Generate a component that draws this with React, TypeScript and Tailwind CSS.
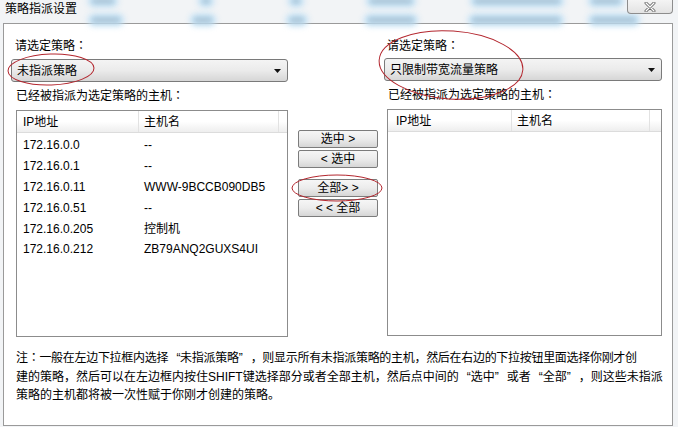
import React from "react";

const hosts: [string, string][] = [
  ["172.16.0.0", "--"],
  ["172.16.0.1", "--"],
  ["172.16.0.11", "WWW-9BCCB090DB5"],
  ["172.16.0.51", "--"],
  ["172.16.0.205", "控制机"],
  ["172.16.0.212", "ZB79ANQ2GUXS4UI"],
];

// blurred desktop showing through the glass frame
const blobs = [
  "left-[88px] top-[-5px] w-[30px]",
  "left-[198px] top-[-5px] w-[16px]",
  "left-[288px] top-[-5px] w-[16px]",
  "left-[366px] top-[-5px] w-[50px]",
  "left-[470px] top-[-5px] w-[94px]",
  "left-[588px] top-[-5px] w-[36px]",
  "left-[88px] top-[14px] w-[36px]",
  "left-[190px] top-[14px] w-[26px]",
  "left-[286px] top-[14px] w-[22px]",
  "left-[364px] top-[14px] w-[54px]",
  "left-[468px] top-[14px] w-[96px]",
  "left-[588px] top-[14px] w-[52px]",
];

// centred full-width punctuation, as the old bitmap font draws it
const Colon = () => <span className="font-['Noto_Sans_CJK_TC',sans-serif]">：</span>;
const Open = () => <span className="inline-block w-[12px] text-right">“</span>;
const Close = () => <span className="inline-block w-[12px] text-left">”</span>;

function Combo({ text }: { text: string }) {
  return (
    <div className="flex h-[23px] items-center justify-between rounded-[3px] border border-[#7a7a7a] bg-gradient-to-b from-[#f4f4f4] via-[#ebebeb] to-[#d6d6d6] pl-[5px] pr-[6px]">
      <span className="text-[12px] leading-none text-black">{text}</span>
      <svg width="7" height="4" viewBox="0 0 7 4">
        <path d="M0 0h7L3.5 4z" fill="#111" />
      </svg>
    </div>
  );
}

function HostList({
  rows,
  col1,
  col2,
}: {
  rows: [string, string][];
  col1: string;
  col2: string;
}) {
  return (
    <div className="flex h-full flex-col border border-[#8c8c8c] bg-white">
      <div className="flex h-[22px] items-center border-b border-[#dcdcdc] bg-gradient-to-b from-white via-white to-[#eeeeee] text-[12px]">
        <div className={`${col1} flex h-full items-center`}>IP地址</div>
        <div className={`${col2} flex h-full items-center border-l border-[#e2e2e2]`}>
          主机名
        </div>
        <div className="h-full flex-1 border-l border-[#e2e2e2]" />
      </div>
      <div className="mt-[2px]">
        {rows.map(([ip, name]) => (
          <div key={ip} className="flex h-[20.8px] items-center text-[12px]">
            <div className={col1}>{ip}</div>
            <div className={`${col2} border-l border-transparent`}>{name}</div>
          </div>
        ))}
      </div>
    </div>
  );
}

function MoveButton({ label, className = "" }: { label: string; className?: string }) {
  return (
    <button
      className={`flex h-[18px] w-full items-center justify-center rounded-[2px] border border-[#7c7c7c] bg-gradient-to-b from-[#f6f6f6] via-[#ececec] to-[#d6d6d6] text-[12px] leading-none text-black ${className}`}
    >
      {label}
    </button>
  );
}

export default function App() {
  return (
    <div className="relative h-[427px] w-[678px] overflow-hidden bg-[#f2f4f6] font-['Liberation_Sans','Noto_Sans_CJK_SC',sans-serif] text-black">
      {/* glass frame */}
      <div className="relative flex h-[23px] items-start">
        {blobs.map((b) => (
          <div key={b} className={`absolute ${b} h-[12px]`}>
            <div className="absolute inset-0 rounded-full bg-[#bfe1f6] blur-[3px]" />
            <div className="absolute inset-x-[4px] inset-y-[3px] rounded-full bg-[#a2b6c6] opacity-60 blur-[2.5px]" />
          </div>
        ))}
        <div className="relative ml-[5px] mt-[2px] text-[12px] leading-[14px]">策略指派设置</div>
        <div className="relative ml-auto mr-[5px] flex h-[14px] w-[46px] items-center justify-center rounded-b-[4px] border border-t-0 border-[#8d8d8d] bg-gradient-to-b from-[#f4f4f4] to-[#e3e3e3]">
          <svg width="12" height="10" viewBox="0 0 12 10">
            <path d="M2 1l8 8M10 1L2 9" stroke="#6b6b6b" strokeWidth="3" strokeLinecap="round" />
            <path d="M2 1l8 8M10 1L2 9" stroke="#ffffff" strokeWidth="1.2" strokeLinecap="round" />
          </svg>
        </div>
      </div>

      {/* content panel */}
      <div className="mx-[3px] h-[403px] w-[670px] border border-[#9a9a9a] bg-white">
        <div className="flex">
          {/* left side */}
          <div className="ml-[7px] flex w-[277px] flex-col">
            <div className="mt-[13px] pl-[4px] text-[12px] leading-[16px]">
              请选定策略<Colon />
            </div>
            <div className="mt-[5px]">
              <Combo text="未指派策略" />
            </div>
            <div className="mt-[5px] pl-[5px] text-[12px] leading-[16px]">
              已经被指派为选定策略的主机<Colon />
            </div>
            <div className="ml-[5px] mt-[6px] h-[227px]">
              <HostList rows={hosts} col1="w-[121px] pl-[6px]" col2="w-[140px] pl-[5px]" />
            </div>
          </div>

          {/* move buttons */}
          <div className="ml-[10px] flex w-[80px] flex-col pt-[106px]">
            <MoveButton label="选中 >" />
            <MoveButton label="< 选中" className="mt-[2px]" />
            <MoveButton label="全部> >" className="mt-[11px]" />
            <MoveButton label="< < 全部" className="mt-[2px]" />
          </div>

          {/* right side */}
          <div className="ml-[6px] flex w-[278px] flex-col">
            <div className="mt-[13px] pl-[3px] text-[12px] leading-[16px]">
              请选定策略<Colon />
            </div>
            <div className="mt-[4px] w-[278px]">
              <Combo text="只限制带宽流量策略" />
            </div>
            <div className="mt-[5px] pl-[4px] text-[12px] leading-[16px]">
              已经被指派为选定策略的主机<Colon />
            </div>
            <div className="ml-[3px] mt-[6px] h-[227px] w-[275px]">
              <HostList rows={[]} col1="w-[123px] pl-[8px]" col2="w-[138px] pl-[5px]" />
            </div>
          </div>
        </div>

        <div className="ml-[12px] mt-[11px] whitespace-nowrap text-[12px] leading-[18.5px]">
          <div className="tracking-[-0.3px]">
            注<Colon />一般在左边下拉框内选择<Open />未指派策略<Close />，则显示所有未指派策略的主机，然后在右边的下拉按钮里面选择你刚才创
          </div>
          <div>
            建的策略，然后可以在左边框内按住SHIFT键选择部分或者全部主机，然后点中间的<Open />选中<Close />或者<Open />全部<Close />，则这些未指派
          </div>
          <div>策略的主机都将被一次性赋于你刚才创建的策略。</div>
        </div>
      </div>

      {/* hand-drawn red marks */}
      <svg className="pointer-events-none absolute left-0 top-0" width="678" height="427">
        <ellipse cx="51" cy="69.5" rx="43" ry="15.5" fill="none" stroke="#b3262e" strokeWidth="1" transform="rotate(-2 51 69.5)" />
        <ellipse cx="451" cy="65" rx="72" ry="34" fill="none" stroke="#b3262e" strokeWidth="1" transform="rotate(4 451 65)" />
        <ellipse cx="337" cy="188" rx="45" ry="13" fill="none" stroke="#b3262e" strokeWidth="1" />
      </svg>
    </div>
  );
}
